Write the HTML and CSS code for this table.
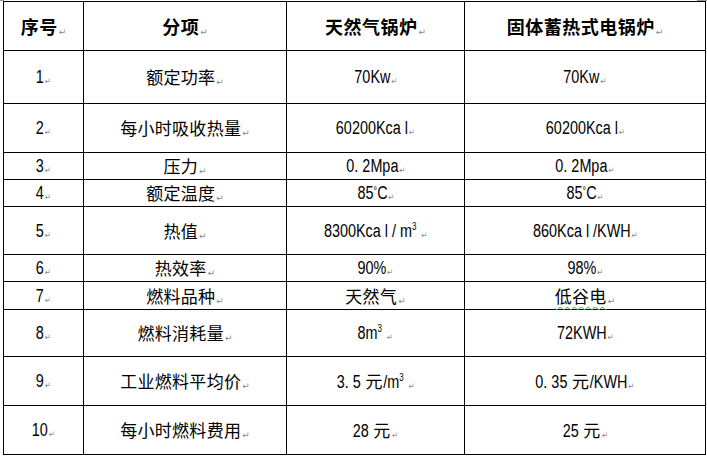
FILE: index.html
```html
<!DOCTYPE html>
<html lang="zh">
<head>
<meta charset="utf-8">
<link rel="stylesheet" href="styles.css">
</head>
<body>
<div class="marks"><span class="mark-l"></span><span class="mark-r"></span></div>
<div class="table">
  <div class="c h"><span class="t">序号<span class="pm">↵</span></span></div>
  <div class="c h"><span class="t">分项<span class="pm">↵</span></span></div>
  <div class="c h"><span class="t">天然气锅炉<span class="pm">↵</span></span></div>
  <div class="c h"><span class="t">固体蓄热式电锅炉<span class="pm">↵</span></span></div>

  <div class="c n"><span class="t">1<span class="pm">↵</span></span></div>
  <div class="c"><span class="t">额定功率<span class="pm">↵</span></span></div>
  <div class="c n"><span class="t">70Kw<span class="pm">↵</span></span></div>
  <div class="c n"><span class="t">70Kw<span class="pm">↵</span></span></div>

  <div class="c n"><span class="t">2<span class="pm">↵</span></span></div>
  <div class="c"><span class="t">每小时吸收热量<span class="pm">↵</span></span></div>
  <div class="c n"><span class="t">60200Kca l<span class="pm">↵</span></span></div>
  <div class="c n"><span class="t">60200Kca l<span class="pm">↵</span></span></div>

  <div class="c n"><span class="t">3<span class="pm">↵</span></span></div>
  <div class="c"><span class="t">压力<span class="pm">↵</span></span></div>
  <div class="c n"><span class="t">0. 2Mpa<span class="pm">↵</span></span></div>
  <div class="c n"><span class="t">0. 2Mpa<span class="pm">↵</span></span></div>

  <div class="c n"><span class="t">4<span class="pm">↵</span></span></div>
  <div class="c"><span class="t">额定温度<span class="pm">↵</span></span></div>
  <div class="c n"><span class="t">85<span class="deg">°</span>C<span class="pm">↵</span></span></div>
  <div class="c n"><span class="t">85<span class="deg">°</span>C<span class="pm">↵</span></span></div>

  <div class="c n"><span class="t">5<span class="pm">↵</span></span></div>
  <div class="c"><span class="t">热值<span class="pm">↵</span></span></div>
  <div class="c n"><span class="t">8300Kca l / m<sup>3</sup> <span class="pm">↵</span></span></div>
  <div class="c n"><span class="t">860Kca l /KWH<span class="pm">↵</span></span></div>

  <div class="c n"><span class="t">6<span class="pm">↵</span></span></div>
  <div class="c"><span class="t">热效率<span class="pm">↵</span></span></div>
  <div class="c n"><span class="t">90%<span class="pm">↵</span></span></div>
  <div class="c n"><span class="t">98%<span class="pm">↵</span></span></div>

  <div class="c n"><span class="t">7<span class="pm">↵</span></span></div>
  <div class="c"><span class="t">燃料品种<span class="pm">↵</span></span></div>
  <div class="c"><span class="t">天然气<span class="pm">↵</span></span></div>
  <div class="c"><span class="t"><span class="spell">低谷电</span><span class="pm">↵</span></span></div>

  <div class="c n"><span class="t">8<span class="pm">↵</span></span></div>
  <div class="c"><span class="t">燃料消耗量<span class="pm">↵</span></span></div>
  <div class="c n"><span class="t">8m<sup>3</sup> <span class="pm">↵</span></span></div>
  <div class="c n"><span class="t">72KWH<span class="pm">↵</span></span></div>

  <div class="c n"><span class="t">9<span class="pm">↵</span></span></div>
  <div class="c"><span class="t">工业燃料平均价<span class="pm">↵</span></span></div>
  <div class="c n"><span class="t">3. 5 <span class="cj">元</span>/m<sup>3</sup> <span class="pm">↵</span></span></div>
  <div class="c n"><span class="t">0. 35 <span class="cj">元</span>/KWH<span class="pm">↵</span></span></div>

  <div class="c n"><span class="t">10<span class="pm">↵</span></span></div>
  <div class="c"><span class="t">每小时燃料费用<span class="pm">↵</span></span></div>
  <div class="c n"><span class="t">28 <span class="cj">元</span><span class="pm">↵</span></span></div>
  <div class="c n"><span class="t">25 <span class="cj">元</span><span class="pm">↵</span></span></div>
</div>
</body>
</html>
```

FILE: styles.css
```css
html, body {
  margin: 0;
  padding: 0;
  background: #fff;
}
body {
  width: 707px;
  height: 457px;
  overflow: hidden;
  font-family: "Noto Sans CJK SC", sans-serif;
  color: #000;
}
.marks {
  position: absolute;
  top: 0;
  left: 0;
  width: 707px;
  height: 1px;
}
.mark-l {
  position: absolute;
  left: 0;
  top: 0;
  width: 4px;
  height: 1px;
  background: #999;
}
.mark-r {
  position: absolute;
  right: 0;
  top: 0;
  width: 10px;
  height: 1px;
  background: #999;
}
.table {
  margin: 1px 0 0 3px;
  width: 703px;
  display: grid;
  grid-template-columns: 79px 202px 177px 240px;
  grid-template-rows: 48px 52px 48px 26px 26px 47px 26px 27px 46px 48px 48px;
  gap: 1px;
  padding: 1px;
  box-sizing: border-box;
  background: #000;
}
.c {
  background: #fff;
  display: flex;
  align-items: center;
  justify-content: center;
  font-size: 17px;
  letter-spacing: 0.3px;
  white-space: nowrap;
  line-height: 1;
}
.t {
  display: inline-block;
  white-space: pre;
}
.h {
  font-weight: bold;
  font-size: 18px;
  letter-spacing: 0.5px;
}
.n {
  font-family: "Liberation Sans", "Noto Sans CJK SC", sans-serif;
  font-size: 18px;
  letter-spacing: 0;
}
.n .t {
  transform: scaleX(0.8);
}
.n .cj {
  font-family: "Noto Sans CJK SC", sans-serif;
  font-size: 17px;
  display: inline-block;
  transform: scaleX(1.25);
  margin: 0 3px;
}
.deg {
  font-size: 11px;
  vertical-align: 5px;
  line-height: 0;
}
sup {
  font-size: 10px;
  vertical-align: 7px;
  line-height: 0;
}
.pm {
  font-family: "DejaVu Sans", sans-serif;
  font-size: 9px;
  font-weight: normal;
  color: #888;
  margin-left: 1px;
  letter-spacing: 0;
  position: relative;
  top: 1px;
}
.spell {
  text-decoration: underline wavy #3aa83a;
  text-decoration-thickness: 1px;
  text-underline-offset: 3px;
}
```
